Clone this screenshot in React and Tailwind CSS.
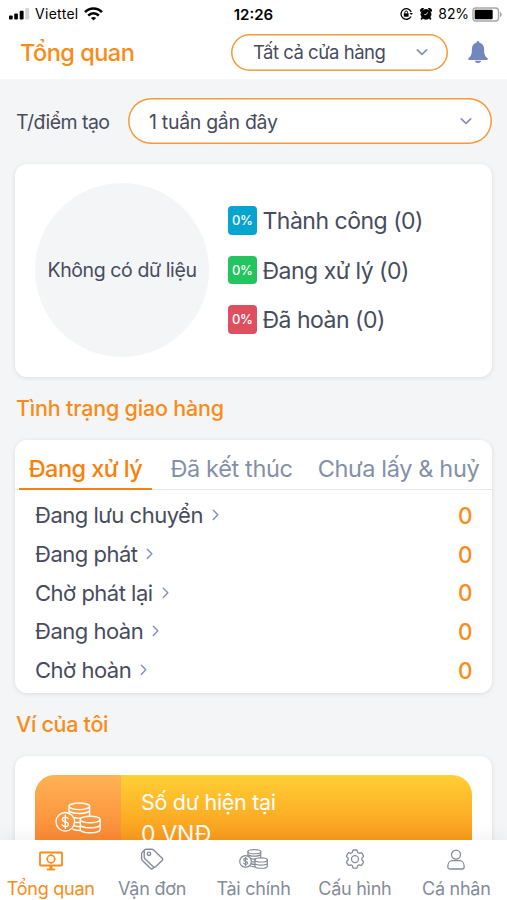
import React, { useState } from 'react';

const stats = [
    { label: 'Thành công', count: 0, color: 'bg-[#06a5d0]' },
    { label: 'Đang xử lý', count: 0, color: 'bg-[#22c55e]' },
    { label: 'Đã hoàn', count: 0, color: 'bg-[#e04f5f]' },
];

const tabs = [
    { label: 'Đang xử lý', className: 'w-[133px] tracking-[-0.55px]' },
    { label: 'Đã kết thúc', className: 'w-[156px] pl-[3px] tracking-[-0.35px]' },
    { label: 'Chưa lấy & huỷ', className: 'w-[181px] tracking-[-0.35px]' },
];

const statuses = ['Đang lưu chuyển', 'Đang phát', 'Chờ phát lại', 'Đang hoàn', 'Chờ hoàn'];

const ChevronDown = () => (
    <svg className="w-3 h-2" viewBox="0 0 12 8" fill="none" stroke="#8090bb" strokeWidth="1.6" strokeLinecap="round" strokeLinejoin="round">
        <path d="M1.300 1.800 6 6.300 10.700 1.800" />
    </svg>
);

const ChevronRight = () => (
    <svg className="w-2 h-3" viewBox="0 0 8 12" fill="none" stroke="#8090bb" strokeWidth="1.4" strokeLinecap="round" strokeLinejoin="round">
        <path d="M1.300 1.200 5.800 5.800 1.300 10.400" />
    </svg>
);

const CoinsIcon = ({ className, strokeWidth }) => (
    <svg className={className} viewBox="0 0 46 32" fill="none" stroke="currentColor" strokeWidth={strokeWidth} strokeLinecap="round" strokeLinejoin="round">
        <circle cx="10.300" cy="19.800" r="9.300" />
        <path d="M13.200 16.700c-.6-1.100-1.700-1.600-2.900-1.600-1.700 0-2.900.9-2.900 2.300 0 3.300 6 1.600 6 4.900 0 1.400-1.300 2.300-3 2.300-1.400 0-2.600-.6-3.200-1.700M10.300 13.200v13.200" />
        <ellipse cx="24.300" cy="4.300" rx="10.300" ry="3.300" />
        <path d="M14 4.300v6.500M34.600 4.300v9.500M14.200 8.800c1.500 1.800 5.200 2.700 10.100 2.700s8.700-.9 10.300-2.700M18.500 15.500c2.700.7 5.500.7 8 .4M20 20.500h5.300M19.500 23.800c1.700.6 3.500.8 5.700.8M18 27.300c2 .8 4.500 1.200 7.200 1.200" />
        <ellipse cx="35.200" cy="17.500" rx="9.900" ry="3.300" />
        <path d="M25.300 17.500v10c0 1.900 4.400 3.300 9.900 3.300s9.900-1.400 9.900-3.300v-10M25.300 22.500c0 1.900 4.400 3.300 9.900 3.300s9.900-1.400 9.900-3.300" />
    </svg>
);

const MonitorIcon = () => (
    <svg className="mt-1 w-6 h-5" viewBox="0 0 24 20" fill="none" stroke="currentColor" strokeWidth="1.800" strokeLinejoin="round">
        <rect x="1" y="1.500" width="22" height="13" rx="0.8" />
        <circle cx="12" cy="8" r="3.700" strokeWidth="1.500" />
        <path d="M12 3v2M12 11v2M7.200 8h2M14.800 8h2" strokeWidth="1.200" />
        <path d="M12 15v3" strokeWidth="3" />
        <path d="M7.800 18.500h8.400" strokeWidth="1.800" />
    </svg>
);

const TagIcon = () => (
    <svg className="w-6 h-[22px]" viewBox="0 0 24 22" fill="none" stroke="currentColor" strokeWidth="1.400" strokeLinecap="round" strokeLinejoin="round">
        <path d="M4.200 3.200C4.200 2 5 1.300 6.200 1.300h5.600c.8 0 1.300.2 1.900.8l8.700 8.300c.6.6.6 1.200 0 1.800l-7.100 6.700c-.6.6-1.200.6-1.800 0L4.900 10.800c-.5-.5-.7-1-.7-1.800Z" />
        <path d="M4 2.600 2.600 4c-.7.500-1 1-1 1.800v4.800c0 .8.200 1.400.8 2l8.200 7.800c.8.7 1.600.6 2.300 0l1.300-1.200" />
        <circle cx="9" cy="5.800" r="1.700" />
    </svg>
);

const GearIcon = () => (
    <svg className="w-5 h-[21px]" viewBox="0 0 20 21" fill="none" stroke="currentColor" strokeWidth="1.300" strokeLinejoin="round">
        <path d="M8.600 1h2.800c.4 0 .7.300.8.700l.4 1.700c.6.200 1.100.5 1.600.9l1.700-.5c.4-.1.800 0 1 .4l1.500 2.500c.2.400.1.800-.2 1.100l-1.300 1.200c.1.900.1 1.600 0 2.100l1.300 1.200c.3.300.4.700.2 1.100l-1.500 2.500c-.2.400-.6.500-1 .4l-1.700-.5c-.5.400-1 .7-1.600.9l-.4 1.700c-.1.400-.4.700-.8.700H8.600c-.4 0-.7-.3-.8-.7l-.4-1.700c-.6-.2-1.100-.5-1.600-.9l-1.700.5c-.4.100-.8 0-1-.4l-1.500-2.500c-.2-.4-.1-.8.200-1.100l1.300-1.200c-.1-.9-.1-1.600 0-2.100L1.800 7.800c-.3-.3-.4-.7-.2-1.100l1.500-2.500c.2-.4.6-.5 1-.4l1.700.5c.5-.4 1-.7 1.600-.9l.4-1.700c.1-.4.4-.7.800-.7Z" />
        <circle cx="10" cy="10.100" r="3.500" />
    </svg>
);

const PersonIcon = () => (
    <svg className="w-[18px] h-[21px]" viewBox="0 0 18 21" fill="none" stroke="currentColor" strokeWidth="1.300" strokeLinejoin="round">
        <circle cx="9" cy="5.600" r="4.500" />
        <path d="M5.300 11.700h7.400c2.800 0 4.500 2.800 4.500 6.100 0 1.400-.8 2.200-2 2.200H2.800c-1.200 0-2-.8-2-2.200 0-3.300 1.700-6.100 4.500-6.100Z" />
    </svg>
);

const navItems = [
    { label: 'Tổng quan', icon: <MonitorIcon /> },
    { label: 'Vận đơn', icon: <TagIcon /> },
    { label: 'Tài chính', icon: <CoinsIcon className="w-[29px] h-5" strokeWidth="1.9" /> },
    { label: 'Cấu hình', icon: <GearIcon /> },
    { label: 'Cá nhân', icon: <PersonIcon /> },
];

const StatusBar = () => (
    <div className="grid grid-cols-3 items-center h-7 pl-[9px] pr-[5px] text-[14px] leading-none text-black">
        <div className="flex items-center">
            <svg className="w-[21px] h-3" viewBox="0 0 21 12">
                <rect x="0" y="7.500" width="3.700" height="4" rx="1" />
                <rect x="5.200" y="5.500" width="3.700" height="6" rx="1" />
                <rect x="10.700" y="2.700" width="3.900" height="8.800" rx="1" />
                <rect x="16.200" y="0" width="4" height="11.500" rx="1" fill="#d4d4d4" />
            </svg>
            <span className="ml-[5px] tracking-[0.3px]">Viettel</span>
            <svg className="ml-[5px] w-[19px] h-[14px]" viewBox="0 0 18 13" fill="none" stroke="black" strokeWidth="2.500">
                <path d="M1 4.700C5.500.1 12.500.1 17 4.700" />
                <path d="M4 8c2.900-2.900 7.100-2.900 10 0" />
                <path d="M6.500 10.200c1.500-1.300 3.500-1.300 5 0L9 12.700Z" fill="black" stroke="none" />
            </svg>
        </div>
        <div className="-ml-1 text-center font-semibold text-[15px]">12:26</div>
        <div className="flex items-center justify-end">
            <svg className="w-[13px] h-3" viewBox="0 0 13 12" fill="none" stroke="black" strokeWidth="1.300">
                <path d="M11.200 4A5.300 5.300 0 1 0 11 8.500" />
                <path d="m9.500 5 1.800 2 1.600-2Z" fill="black" stroke="none" />
                <rect x="3.800" y="5.300" width="4.800" height="3.400" fill="black" stroke="none" />
                <path d="M4.800 5.500V4.400a1.400 1.400 0 0 1 2.800 0v1.100" strokeWidth="1" />
            </svg>
            <svg className="ml-[7px] w-3 h-3" viewBox="0 0 12 12">
                <path d="M0 3.300A2.700 2.700 0 0 1 4.300.6L1 4ZM12 3.300A2.700 2.700 0 0 0 7.700.6L11 4Z" />
                <circle cx="6" cy="6.300" r="5.400" />
                <path d="m2.500 9.500-1.300 2M9.500 9.500l1.300 2" stroke="black" strokeWidth="1.700" />
                <path d="M7.700 4.300 6 6.700 4.300 6.500" stroke="white" strokeWidth="0.8" fill="none" />
            </svg>
            <span className="ml-[6px] tracking-[-0.1px]">82%</span>
            <svg className="ml-[3px] w-[30px] h-[15px]" viewBox="0 0 30 15">
                <rect x="1" y="1" width="25.500" height="13" rx="3" fill="white" stroke="#a6a6a6" strokeWidth="1.400" />
                <rect x="2.700" y="2.700" width="18" height="9.600" rx="1" />
                <path d="M28 5c2.300.6 2.300 4.400 0 5Z" fill="#a6a6a6" />
            </svg>
        </div>
    </div>
);

const App = () => {
    const [activeTab, setActiveTab] = useState('Đang xử lý');
    const [activeNav, setActiveNav] = useState('Tổng quan');

    return (
        <div className="flex flex-col w-full h-[900px] overflow-hidden bg-[#f3f5f7] font-['Inter','Noto_Sans',sans-serif] text-[#484c5c]">
            <header className="shrink-0 h-[79px] bg-white">
                <StatusBar />
                <div className="flex items-center h-[48px] pl-5 pr-[19px]">
                    <h1 className="pt-px text-[23.5px] leading-none font-medium tracking-[-0.5px] text-[#f98b17]">Tổng quan</h1>
                    <button className="ml-auto flex items-center justify-between w-[217px] h-[37px] pl-[22px] pr-5 shadow-[inset_0_0_0_1.5px_#f7983b] rounded-full text-[18.5px] leading-none tracking-[-0.5px]">
                        <span className="pt-px">Tất cả cửa hàng</span>
                        <ChevronDown />
                    </button>
                    <svg className="ml-5 w-5 h-[22px]" viewBox="0 0 20 22" fill="#7288bd">
                        <path d="M10 0c.8 0 1.300.6 1.300 1.500 3 .8 4.800 3.300 4.800 6.500 0 4.800.6 7 3.200 9 1 .8.7 1.900-.5 1.900H1.200C0 18.900-.3 17.800.7 17c2.600-2 3.200-4.200 3.200-9 0-3.200 1.800-5.700 4.800-6.500C8.700.6 9.200 0 10 0ZM6.800 19.800h6.400c-.4 1.400-1.500 2.200-3.200 2.200s-2.800-.8-3.200-2.200Z" />
                    </svg>
                </div>
            </header>

            <main className="flex-1 min-h-0 overflow-hidden px-[15px]">
                <div className="flex items-center justify-between mt-[19px] pl-px">
                    <span className="pt-[3px] text-[19.5px] leading-none whitespace-nowrap tracking-[-0.55px]">T/điểm tạo</span>
                    <button className="flex items-center justify-between w-[364px] h-[46px] pl-[21px] pr-5 bg-white shadow-[inset_0_0_0_1.5px_#f7983b] rounded-full text-[19.5px] leading-none tracking-[-0.3px]">
                        <span className="pt-[3px]">1 tuần gần đây</span>
                        <ChevronDown />
                    </button>
                </div>

                <section className="flex items-center mt-5 h-[213px] pl-5 pb-px bg-white rounded-xl shadow-[0_1px_5px_rgba(0,0,0,0.1)]">
                    <div className="flex items-center justify-center shrink-0 w-[174px] h-[174px] pt-[2px] rounded-full bg-[#f3f5f7] text-[19.5px] tracking-[-0.4px] whitespace-nowrap">
                        Không có dữ liệu
                    </div>
                    <div className="flex flex-col gap-[21px] ml-[19px]">
                        {stats.map(stat => (
                            <div key={stat.label} className="flex items-center gap-[6px]">
                                <span className={`flex items-center justify-center w-[28.5px] h-[28.5px] rounded-[4px] text-white text-[13px] leading-none font-medium tracking-[-0.4px] ${stat.color}`}>0%</span>
                                <span className="pt-[2px] text-[23px] leading-none whitespace-nowrap tracking-[-0.5px]">{stat.label} ({stat.count})</span>
                            </div>
                        ))}
                    </div>
                </section>

                <h2 className="mt-[17px] h-[30px] pl-px text-[21.5px] leading-[29px] font-medium tracking-[-0.2px] text-[#f98b17]">Tình trạng giao hàng</h2>

                <section className="mt-4 h-[253px] bg-white rounded-xl shadow-[0_1px_5px_rgba(0,0,0,0.1)]">
                    <div className="flex h-[50px] pl-1 border-b border-[#e3e6ea]">
                        {tabs.map(tab => (
                            <button
                                key={tab.label}
                                onClick={() => setActiveTab(tab.label)}
                                className={`h-[50px] pt-[9px] text-[23.5px] leading-none whitespace-nowrap border-b-2 ${tab.className} ${activeTab === tab.label ? 'font-medium text-[#fa7f0b] border-[#fa7f0b]' : 'text-[#8490a8] border-transparent'}`}
                            >
                                {tab.label}
                            </button>
                        ))}
                    </div>
                    <ul className="pt-[6px]">
                        {statuses.map(status => (
                            <li key={status} className="flex items-center h-[38.7px] pl-5 pr-5 text-[22px] leading-none">
                                <span className="mr-[9px] tracking-[-0.5px]">{status}</span>
                                <ChevronRight />
                                <span className="ml-auto pt-[2px] text-[22.5px] font-medium tracking-[-0.5px] text-[#f98b17]">0</span>
                            </li>
                        ))}
                    </ul>
                </section>

                <h2 className="mt-[17px] h-[30px] pl-px text-[21.5px] leading-[28px] font-medium tracking-[-0.3px] text-[#f98b17]">Ví của tôi</h2>

                <section className="mt-4 h-[180px] px-5 pt-[19px] bg-white rounded-xl shadow-[0_1px_5px_rgba(0,0,0,0.1)]">
                    <div className="flex h-[130px] rounded-[20px] overflow-hidden text-white bg-gradient-to-b from-[#ffd034] to-[#ee6000]">
                        <div className="flex justify-center w-[86px] pt-[27px] bg-gradient-to-b from-[#ffb254] to-[#f35a00]">
                            <CoinsIcon className="w-[46px] h-8" strokeWidth="1.4" />
                        </div>
                        <div className="pl-5 pt-[11px] leading-[32px]">
                            <p className="text-[21.5px] tracking-[-0.3px]">Số dư hiện tại</p>
                            <p className="text-[23px] tracking-[-0.3px]">0 VNĐ</p>
                        </div>
                    </div>
                </section>
            </main>

            <nav className="relative shrink-0 grid grid-cols-5 h-[60px] bg-white shadow-[0_-4px_16px_rgba(0,0,0,0.05)]">
                {navItems.map(item => (
                    <button
                        key={item.label}
                        onClick={() => setActiveNav(item.label)}
                        className={`flex flex-col items-center ${activeNav === item.label ? 'text-[#f98b17]' : 'text-[#858b9a]'}`}
                    >
                        <span className="flex items-center justify-center h-6 mt-[7px]">{item.icon}</span>
                        <span className="mt-2 text-[18px] leading-[20px] whitespace-nowrap tracking-[-0.25px]">{item.label}</span>
                    </button>
                ))}
            </nav>
        </div>
    );
};

export default App;
